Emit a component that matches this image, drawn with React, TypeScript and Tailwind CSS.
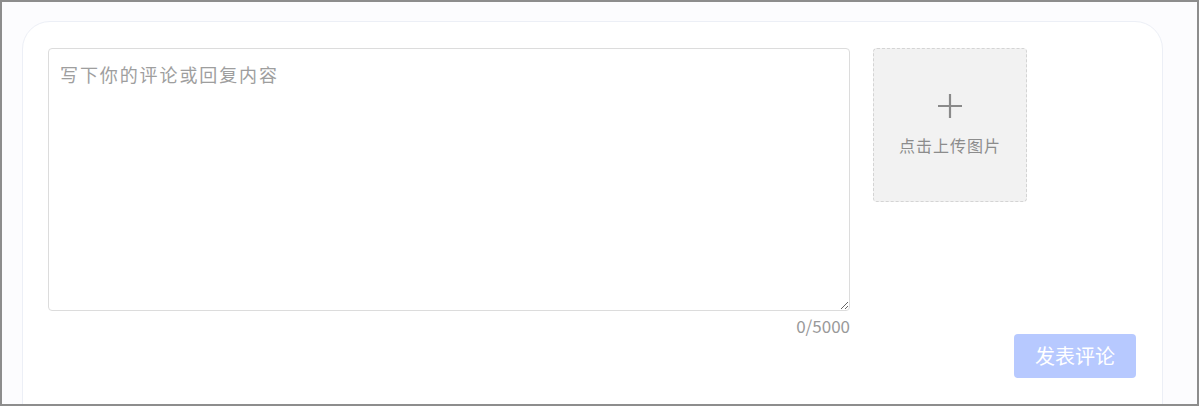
import React from "react";

export default function App() {
  return (
    <div
      className="w-[1199px] h-[406px] overflow-hidden border-2 border-[#8d8d8d] bg-[#fcfcfe]"
      style={{ fontFamily: '"Noto Sans CJK SC", "Noto Sans", sans-serif' }}
    >
      <div className="ml-[20px] mt-[19px] w-[1141px] h-[420px] rounded-[28px] border border-[#eceff6] bg-white pl-[25px] pr-[26px] pt-[26px]">
        <div className="flex gap-[23px]">
          <div className="flex w-[802px] flex-col">
            <textarea
              className="h-[263px] w-full rounded-[4px] border border-[#dcdcdc] bg-white px-[11px] py-[12px] text-[18px] leading-[26px] tracking-[1.9px] text-[#606266] outline-none placeholder:text-[#9e9e9e]"
              placeholder="写下你的评论或回复内容"
            />
            <div className="h-[23px] text-right text-[17px] leading-[30px] text-[#999999]">
              0/5000
            </div>
          </div>
          <div className="flex h-[154px] w-[154px] flex-col items-center rounded-[4px] border border-dashed border-[#d4d4d4] bg-[#f2f2f2]">
            <svg width="26" height="26" viewBox="0 0 26 26" className="mt-[44px]">
              <path d="M13 1v24M1 13h24" stroke="#8a8a8a" strokeWidth="2.2" />
            </svg>
            <div className="mt-[16px] text-[16px] leading-[20px] tracking-[1px] text-[#8c8c8c]">点击上传图片</div>
          </div>
        </div>
        <div className="flex justify-end">
          <button className="h-[44px] w-[122px] rounded-[4px] bg-[#b7c9ff] text-[20px] text-white">
            发表评论
          </button>
        </div>
      </div>
    </div>
  );
}
